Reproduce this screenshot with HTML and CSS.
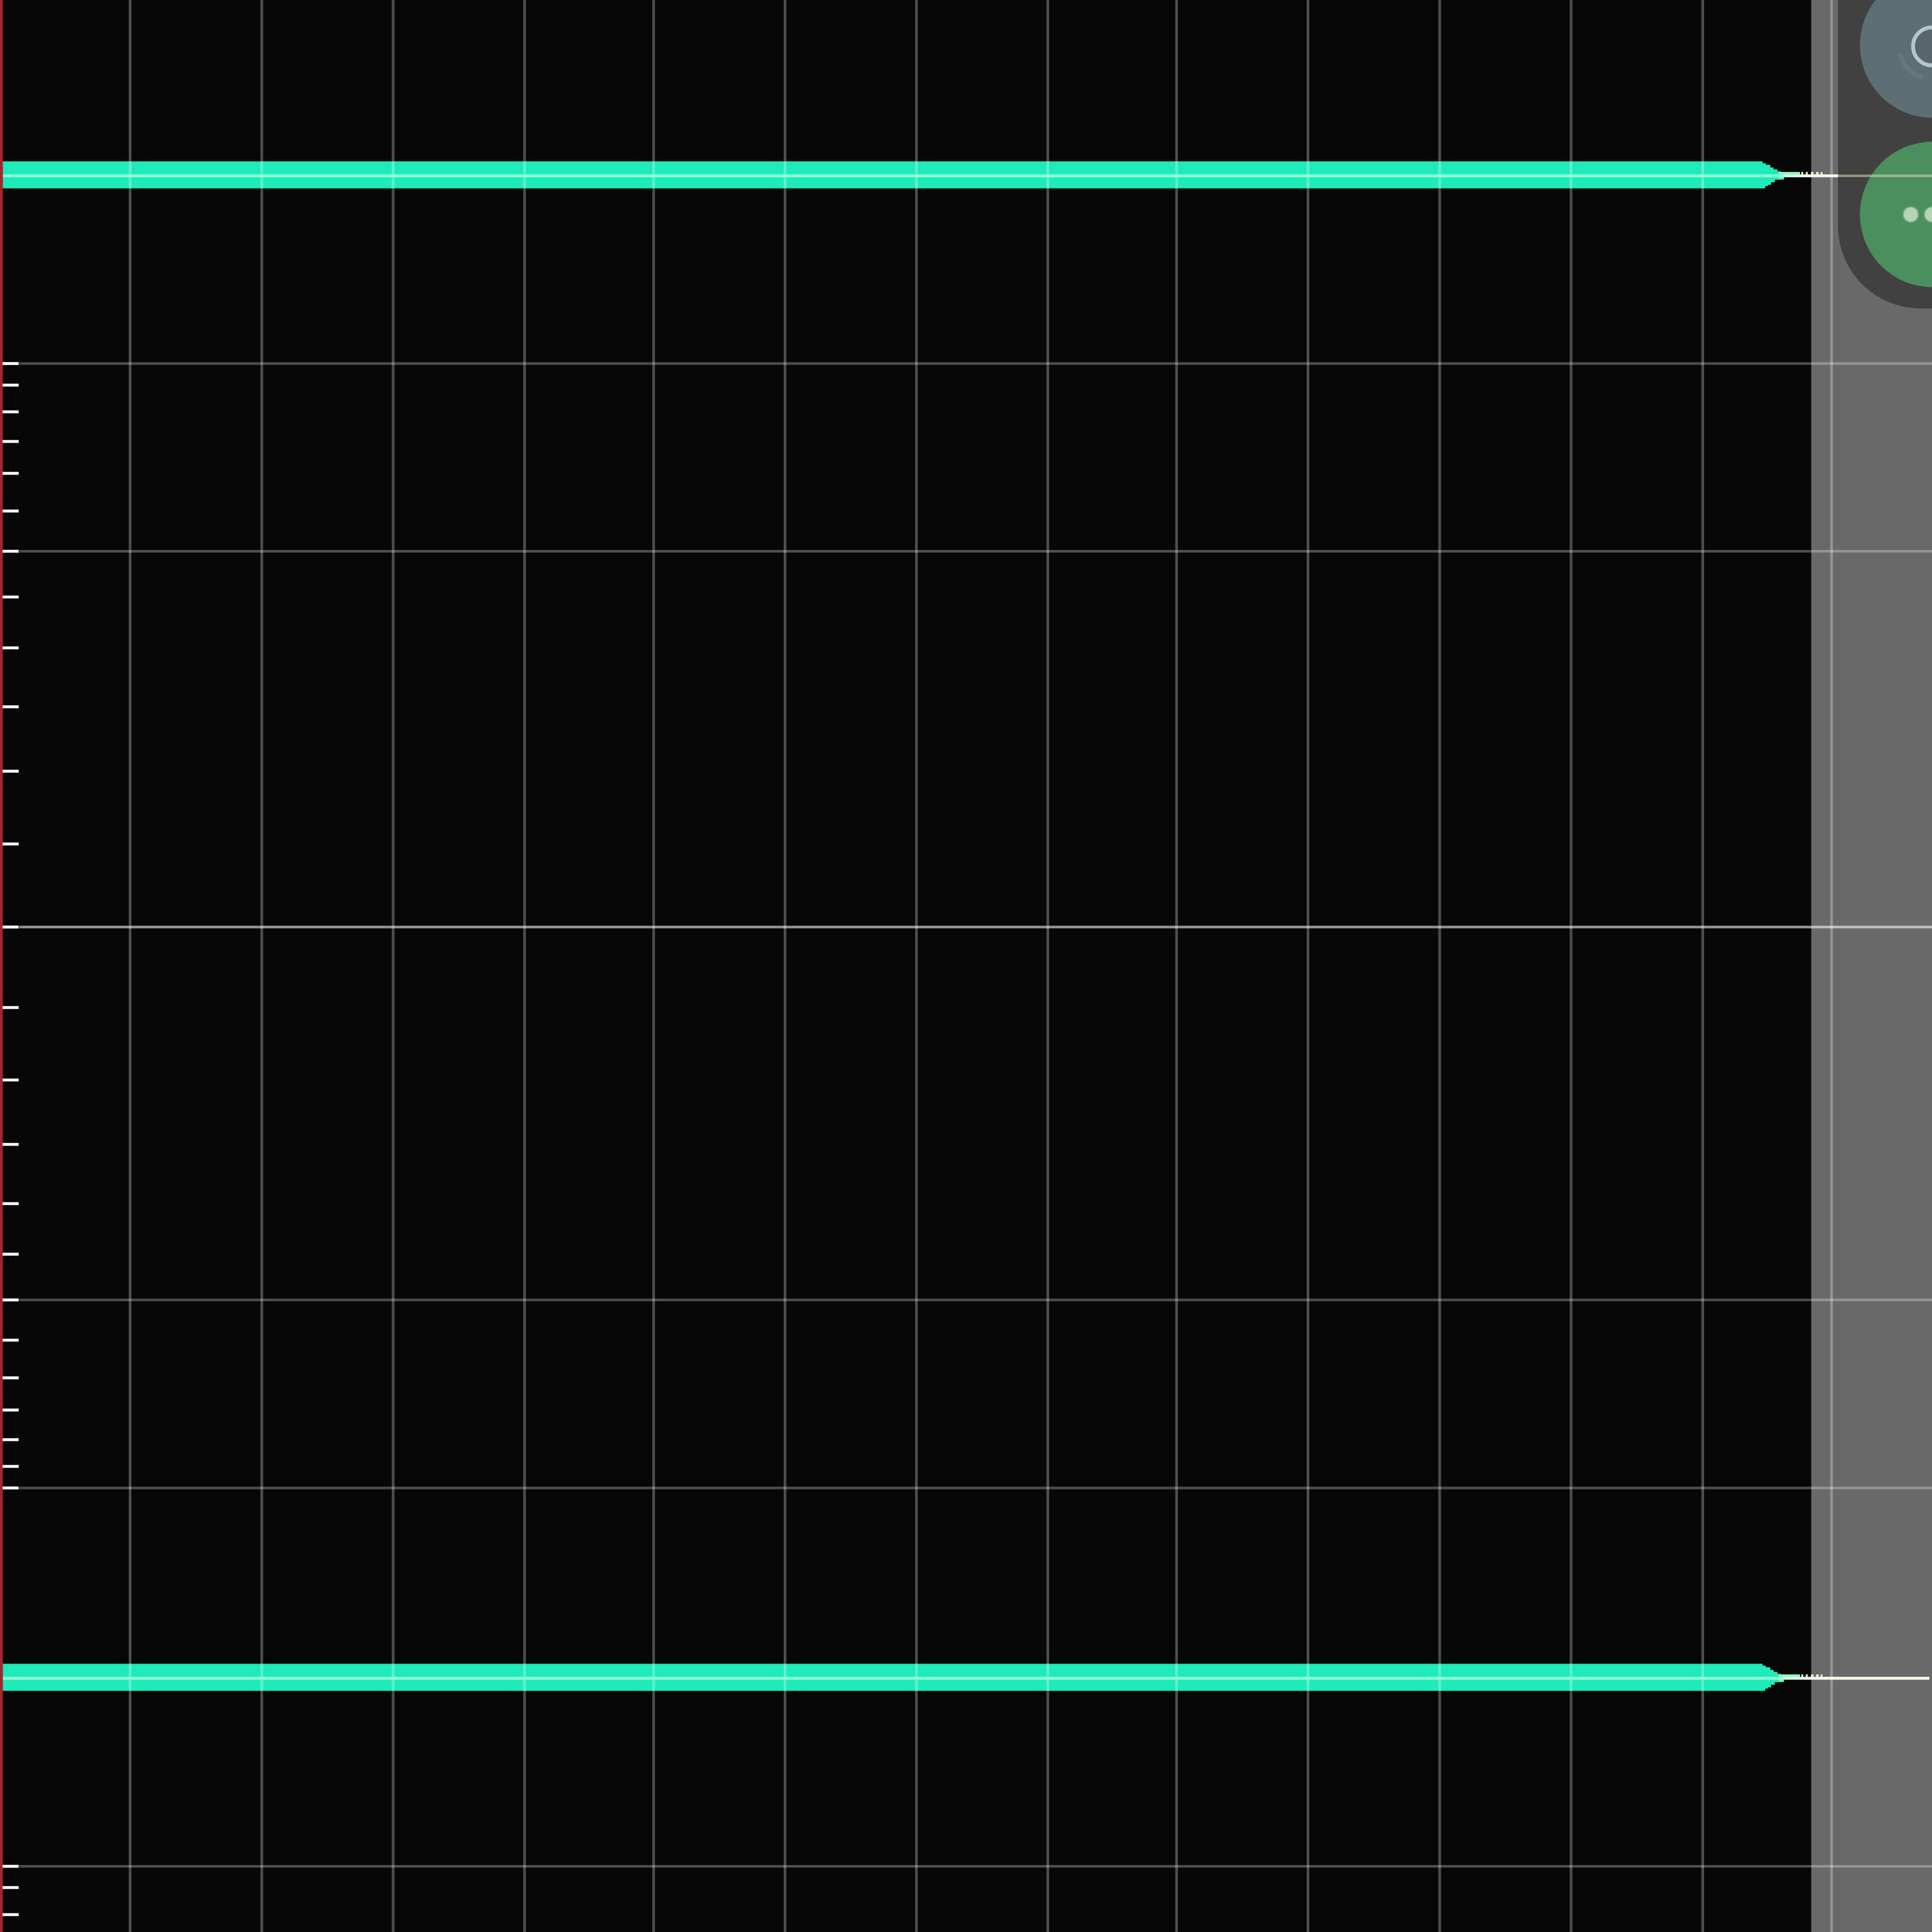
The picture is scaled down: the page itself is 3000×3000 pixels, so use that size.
FILE: index.html
```
<!DOCTYPE html>
<html lang="en">
<head>
<meta charset="utf-8">
<title>Waveform</title>
<link rel="stylesheet" href="styles.css">
</head>
<body>
<main class="editor">
  <svg class="plot" viewBox="0 0 3000 3000" width="3000" height="3000">
    <defs>
      <g id="wave">
        <path class="signal" d="M4 -22.5H2737V-19.5H2742V-17H2749V-13H2754V-10H2760V-7H2765V3H2770V6H2756V10H2750V14H2745V16H2741V19.5H4Z"/>
        <path class="tail" d="M2762 -6H2795V2H2770V4H2762Z"/>
        <path class="noise" d="M2797 -4h3M2804 -4h3M2812 -4h4M2820 -4h4M2827 -4h3"/>
      </g>
    </defs>
    <rect class="outside" x="2812.5" y="0" width="188" height="3000"/>
    <use href="#wave" y="273"/>
    <use href="#wave" y="2606"/>
    <path class="grid" d="M202 0V3000M406.5 0V3000M610.5 0V3000M814.5 0V3000M1015 0V3000M1219 0V3000M1423 0V3000M1627 0V3000M1827 0V3000M2031 0V3000M2235.5 0V3000M2439.5 0V3000M2644 0V3000M2844 0V3000"/>
    <path class="grid" d="M30 564.5H3000M30 856H3000M30 2018.5H3000M30 2310.5H3000M30 2898H3000"/>
    <path class="middle" d="M30 1439.5H3000"/>
    <path class="base" d="M4 273H2770M4 2606H2770"/>
    <path class="fade" d="M2770 273H2797M2770 2606H2797"/>
    <path class="rest" d="M2797 273H2854M2797 2606H2996"/>
    <path class="playhead" d="M2.25 0V3000"/>
    <path class="ticks" d="M4 564.5h25M4 598h25M4 639.5h25M4 685.5h25M4 735h25M4 793.5h25M4 856h25M4 927h25M4 1006h25M4 1097.5h25M4 1197.5h25M4 1310.5h25M4 1439.5h25M4 1564.5h25M4 1677h25M4 1777h25M4 1869h25M4 1947.5h25M4 2018.5h25M4 2081h25M4 2139.5h25M4 2189.5h25M4 2235.5h25M4 2277h25M4 2310.5h25M4 2898h25M4 2931h25M4 2973h25"/>
  </svg>
  <aside class="dock">
    <button class="round record" aria-label="Record">
      <svg width="226" height="226" viewBox="0 0 226 226">
        <path class="halo" d="M62 126A52 52 0 0 0 98 164"/>
        <circle class="ring" cx="112" cy="115" r="29.5"/>
      </svg>
    </button>
    <button class="round more" aria-label="More">
      <svg width="226" height="226" viewBox="0 0 226 226">
        <circle class="dot" cx="79" cy="113" r="11"/>
        <circle class="dot" cx="112" cy="113" r="11"/>
        <circle class="dot" cx="145" cy="113" r="11"/>
      </svg>
    </button>
    <span class="dock-line"></span>
  </aside>
</main>
</body>
</html>
```
FILE: styles.css
```
body {
  margin: 0;
  overflow: hidden;
  background: #070707;
  font-family: "Liberation Sans", sans-serif;
}

.editor {
  position: relative;
  width: 3000px;
  height: 3000px;
  overflow: hidden;
}

.plot {
  display: block;
}

.outside {
  fill: #696969;
}

.signal {
  fill: #1eebb8;
}

.tail {
  fill: #8df5c4;
}

.noise {
  fill: none;
  stroke: #dcebd9;
  stroke-width: 4;
}

.grid {
  fill: none;
  stroke: rgba(255, 255, 255, 0.29);
  stroke-width: 4.2;
}

.middle {
  fill: none;
  stroke: rgba(255, 255, 255, 0.58);
  stroke-width: 4.2;
}

.base {
  fill: none;
  stroke: #8fffd8;
  stroke-width: 4.4;
}

.fade {
  fill: none;
  stroke: #d2fbe0;
  stroke-width: 4.4;
}

.rest {
  fill: none;
  stroke: #f6f8e8;
  stroke-width: 4.6;
}

.playhead {
  stroke: #a0252e;
  stroke-width: 4.5;
}

.ticks {
  fill: none;
  stroke: #fffdf8;
  stroke-width: 4.4;
}

/* Floating controls over the top right corner of the plot */
.dock {
  position: absolute;
  top: -60px;
  left: 2854px;
  box-sizing: border-box;
  width: 294px;
  height: 539px;
  padding: 17px 34px 33px;
  display: flex;
  flex-direction: column;
  gap: 37px;
  border-radius: 0 0 128px 128px;
  background: #424141;
}

.round {
  flex: none;
  width: 226px;
  height: 226px;
  padding: 0;
  border: 0;
  border-radius: 50%;
}

.round svg {
  display: block;
}

.record {
  background: #5d6e74;
}

.more {
  background: #4c8f5e;
}

.ring {
  fill: #57666b;
  stroke: #b6c5cc;
  stroke-width: 6;
}

.halo {
  fill: none;
  stroke: #68777e;
  stroke-width: 7;
}

.dot {
  fill: #b5d3b6;
  stroke: rgba(181, 211, 182, 0.35);
  stroke-width: 4;
}

.dock-line {
  position: absolute;
  top: 331px;
  left: 0;
  width: 100%;
  height: 4px;
  background: rgba(225, 225, 190, 0.5);
}
```
